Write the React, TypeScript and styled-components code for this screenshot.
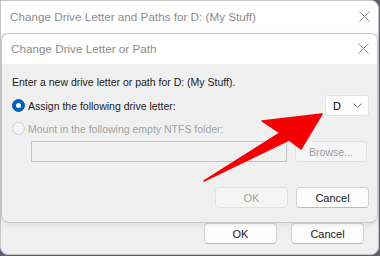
import * as React from 'react'
import styled, { createGlobalStyle } from 'styled-components'

const GlobalStyle = createGlobalStyle`
  * { box-sizing: border-box; }
  html, body { margin: 0; padding: 0; }
  body {
    background: #5e5e72;
    font-family: "Liberation Sans", Arial, sans-serif;
    color: #1a1a1a;
  }
`

const Desktop = styled.div`
  position: relative;
  width: 380px;
  height: 256px;
  overflow: hidden;
`

const Window = styled.div`
  display: flex;
  flex-direction: column;
  width: 379px;
  height: 255px;
  border: 1px solid #c6c6c6;
  border-radius: 0 8px 8px 8px;
  background: #f0f0f0;
  overflow: hidden;
`

const Dialog = styled(Window)`
  position: absolute;
  left: 1px;
  top: 33px;
  width: 377px;
  height: 190px;
  border-radius: 8px;
  box-shadow: 0 2px 6px rgba(0, 0, 0, 0.08);
`

interface TitleBarProps {
  height: number
}

const TitleBar = styled.div<TitleBarProps>`
  display: flex;
  align-items: center;
  justify-content: space-between;
  height: ${p => p.height}px;
  flex-shrink: 0;
  padding: 0 8px 1px 9px;
  background: #ffffff;
`

const Title = styled.span`
  font-size: 11.7px;
  color: #8c8c8c;
  white-space: nowrap;
`

const CloseIcon = () => (
  <svg width="11" height="11" viewBox="0 0 11 11">
    <path d="M0.5 0.5 L10.5 10.5 M10.5 0.5 L0.5 10.5" stroke="#8a8a8a" strokeWidth="1" fill="none" />
  </svg>
)

const WindowBody = styled.div`
  flex: 1;
  display: flex;
  flex-direction: column;
  justify-content: flex-end;
  padding: 0 14px 10px 0;
`

const DialogBody = styled.div`
  flex: 1;
  display: flex;
  flex-direction: column;
  padding: 11px 8px 0 10px;
  font-size: 10.5px;
`

const Prompt = styled.div`
  height: 14px;
  line-height: 14px;
  white-space: nowrap;
`

interface RowProps {
  top: number
  height: number
}

const Row = styled.div<RowProps>`
  display: flex;
  align-items: center;
  margin-top: ${p => p.top}px;
  height: ${p => p.height}px;
`

const ButtonRow = styled.div<{ gap: number }>`
  display: flex;
  align-items: center;
  justify-content: flex-end;
  gap: ${p => p.gap}px;
`

const DialogButtons = styled(ButtonRow)`
  flex: 1;
`

interface RadioProps {
  checked?: boolean
  disabled?: boolean
}

const RadioDot = styled.span<RadioProps>`
  position: relative;
  width: 13px;
  height: 13px;
  border-radius: 50%;
  flex-shrink: 0;
  background: ${p => (p.checked ? '#005fb8' : '#f5f5f5')};
  border: 1px solid ${p => (p.checked ? '#005fb8' : '#cfcfcf')};

  &::after {
    content: '';
    display: ${p => (p.checked ? 'block' : 'none')};
    position: absolute;
    left: 3px;
    top: 3px;
    width: 5px;
    height: 5px;
    border-radius: 50%;
    background: #ffffff;
  }
`

const RadioLabel = styled.span<RadioProps>`
  margin-left: 3px;
  white-space: nowrap;
  color: ${p => (p.disabled ? '#a3a3a3' : '#1a1a1a')};
`

const Radio: React.FC<RadioProps & { label: string }> = ({ checked, disabled, label }) => (
  <>
    <RadioDot checked={checked} disabled={disabled} />
    <RadioLabel disabled={disabled}>{label}</RadioLabel>
  </>
)

const Select = styled.div`
  display: flex;
  align-items: center;
  justify-content: space-between;
  margin-left: auto;
  width: 44px;
  height: 21px;
  padding: 0 6px 0 7px;
  background: #ffffff;
  border: 1px solid #e3e3e3;
  border-radius: 3px;
  font-size: 11px;
  color: #000;
`

const Chevron = () => (
  <svg width="9" height="5" viewBox="0 0 9 5">
    <path d="M0.5 0.5 L4.5 4.5 L8.5 0.5" stroke="#6a6a6a" strokeWidth="1" fill="none" />
  </svg>
)

const PathInput = styled.div`
  margin-left: 19px;
  width: 256px;
  height: 21px;
  border: 1px solid #c2c2c2;
  background: #f0f0f0;
`

interface ButtonProps {
  disabled?: boolean
  width?: number
}

const Button = styled.div<ButtonProps>`
  display: flex;
  align-items: center;
  justify-content: center;
  flex-shrink: 0;
  width: ${p => p.width ?? 73}px;
  height: 21px;
  font-size: 11px;
  border-radius: 4px;
  background: ${p => (p.disabled ? '#f5f5f5' : '#fdfdfd')};
  border: 1px solid ${p => (p.disabled ? '#e1e1e1' : '#d2d2d2')};
  border-bottom-color: ${p => (p.disabled ? '#e1e1e1' : '#bdbdbd')};
  color: ${p => (p.disabled ? '#a0a0a0' : '#1a1a1a')};
`

const Browse = styled(Button)`
  margin-left: 8px;
  font-size: 10.5px;
`

const Annotation = styled.svg`
  position: absolute;
  left: 0;
  top: 0;
  pointer-events: none;
`

const App: React.FC = () => (
  <Desktop>
    <GlobalStyle />
    <Window>
      <TitleBar height={32}>
        <Title>Change Drive Letter and Paths for D: (My Stuff)</Title>
        <CloseIcon />
      </TitleBar>
      <WindowBody>
        <ButtonRow gap={14}>
          <Button>OK</Button>
          <Button>Cancel</Button>
        </ButtonRow>
      </WindowBody>
    </Window>

    <Dialog>
      <TitleBar height={30}>
        <Title>Change Drive Letter or Path</Title>
        <CloseIcon />
      </TitleBar>
      <DialogBody>
        <Prompt>Enter a new drive letter or path for D: (My Stuff).</Prompt>
        <Row top={6} height={21}>
          <Radio checked label="Assign the following drive letter:" />
          <Select>
            <span>D</span>
            <Chevron />
          </Select>
        </Row>
        <Row top={5} height={15}>
          <Radio disabled label="Mount in the following empty NTFS folder:" />
        </Row>
        <Row top={5} height={21}>
          <PathInput />
          <Browse disabled width={72}>Browse...</Browse>
        </Row>
        <Row top={25} height={21}>
          <DialogButtons gap={8}>
            <Button disabled>OK</Button>
            <Button>Cancel</Button>
          </DialogButtons>
        </Row>
      </DialogBody>
    </Dialog>

    <Annotation width="380" height="256" viewBox="0 0 380 256">
      <polygon
        points="322,114 262,121 280,133 204,181 289,140 301,149"
        fill="#f50000"
        stroke="#f50000"
        strokeWidth="1.5"
        strokeLinejoin="round"
      />
    </Annotation>
  </Desktop>
)

export default App
